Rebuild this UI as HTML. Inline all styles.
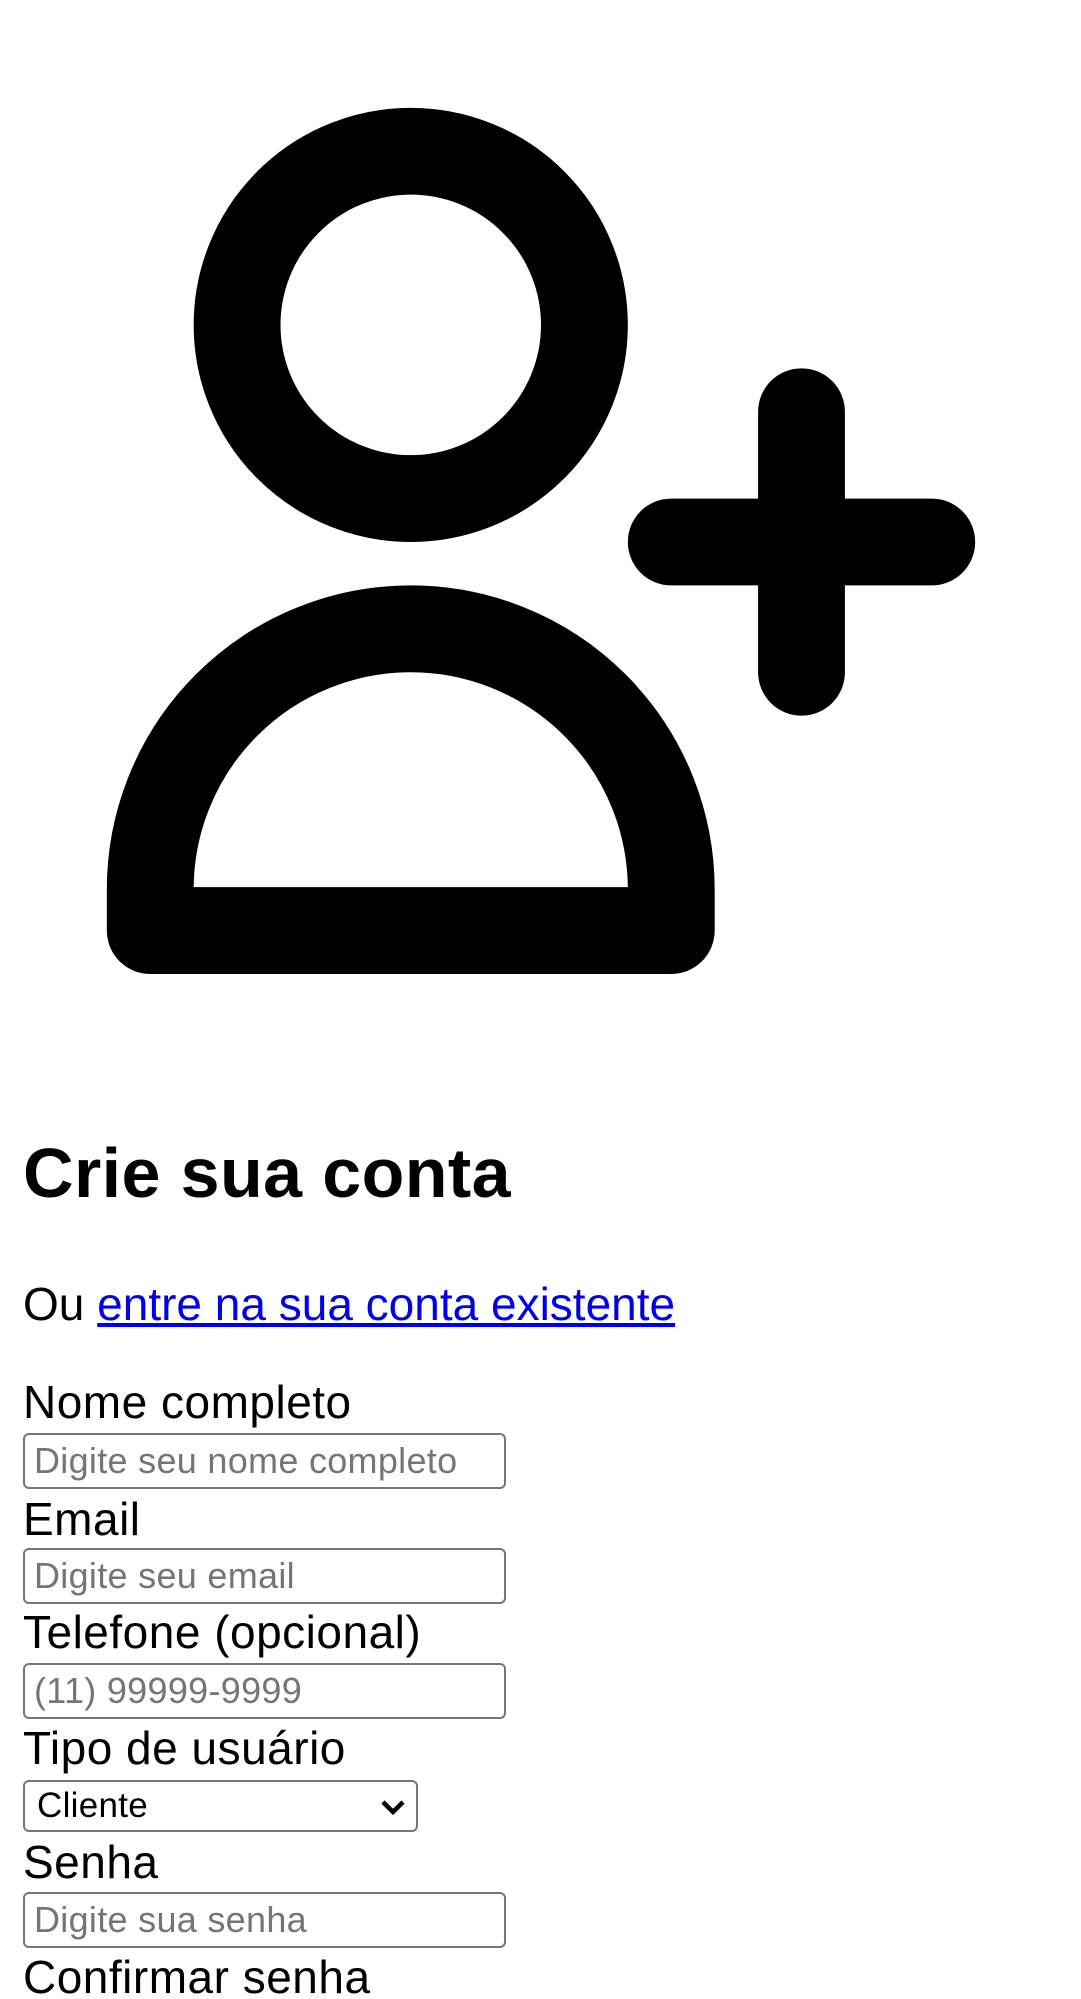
<!DOCTYPE html>
<html><head><meta charset="utf-8"><style>
html,body{margin:0;padding:0;background:#fff;width:1081px;height:1999px;overflow:hidden;position:relative;font-family:"Liberation Sans",Arial,sans-serif;color:#000}
.a{position:absolute;left:23px;white-space:nowrap;line-height:1.15}
.lbl{font-size:46px;letter-spacing:0.5px}
.inp{position:absolute;left:23px;width:479px;height:52px;border:2px solid #767676;border-radius:6px;box-sizing:content-box;display:flex;align-items:center;padding:0;}
.inp span{font-size:36px;color:#757575;padding-left:9px;white-space:nowrap;letter-spacing:0.3px}
</style></head><body>
<svg style="position:absolute;left:20px;top:21px" width="1042" height="1042" viewBox="0 0 24 24" fill="none" stroke="#000" stroke-width="2" stroke-linecap="round" stroke-linejoin="round">
<circle cx="9" cy="7" r="4"/>
<path d="M3 20.95V20a6 6 0 0 1 12 0v.95z"/>
<path d="M18 9v6M15 12h6"/>
</svg>
<div class="a" style="top:1133px;font-size:70px;font-weight:bold;letter-spacing:0.4px">Crie sua conta</div>
<div class="a lbl" style="top:1278px;letter-spacing:0">Ou <span style="color:#0000EE;text-decoration:underline">entre na sua conta existente</span></div>
<div class="a lbl" style="top:1376px">Nome completo</div>
<div class="inp" style="top:1433px"><span>Digite seu nome completo</span></div>
<div class="a lbl" style="top:1493px">Email</div>
<div class="inp" style="top:1548px"><span>Digite seu email</span></div>
<div class="a lbl" style="top:1606px">Telefone (opcional)</div>
<div class="inp" style="top:1663px"><span>(11) 99999-9999</span></div>
<div class="a lbl" style="top:1722px">Tipo de usuário</div>
<div class="inp" style="top:1780px;width:391px;height:48px;"><span style="color:#000;padding-left:12px;font-size:35px">Cliente</span>
<svg style="position:absolute;right:10px;top:15px" width="26" height="20" viewBox="0 0 26 20"><path d="M3 5l10 10 10-10" fill="none" stroke="#000" stroke-width="4.5"/></svg></div>
<div class="a lbl" style="top:1836px">Senha</div>
<div class="inp" style="top:1892px"><span>Digite sua senha</span></div>
<div class="a lbl" style="top:1951px">Confirmar senha</div>
</body></html>
